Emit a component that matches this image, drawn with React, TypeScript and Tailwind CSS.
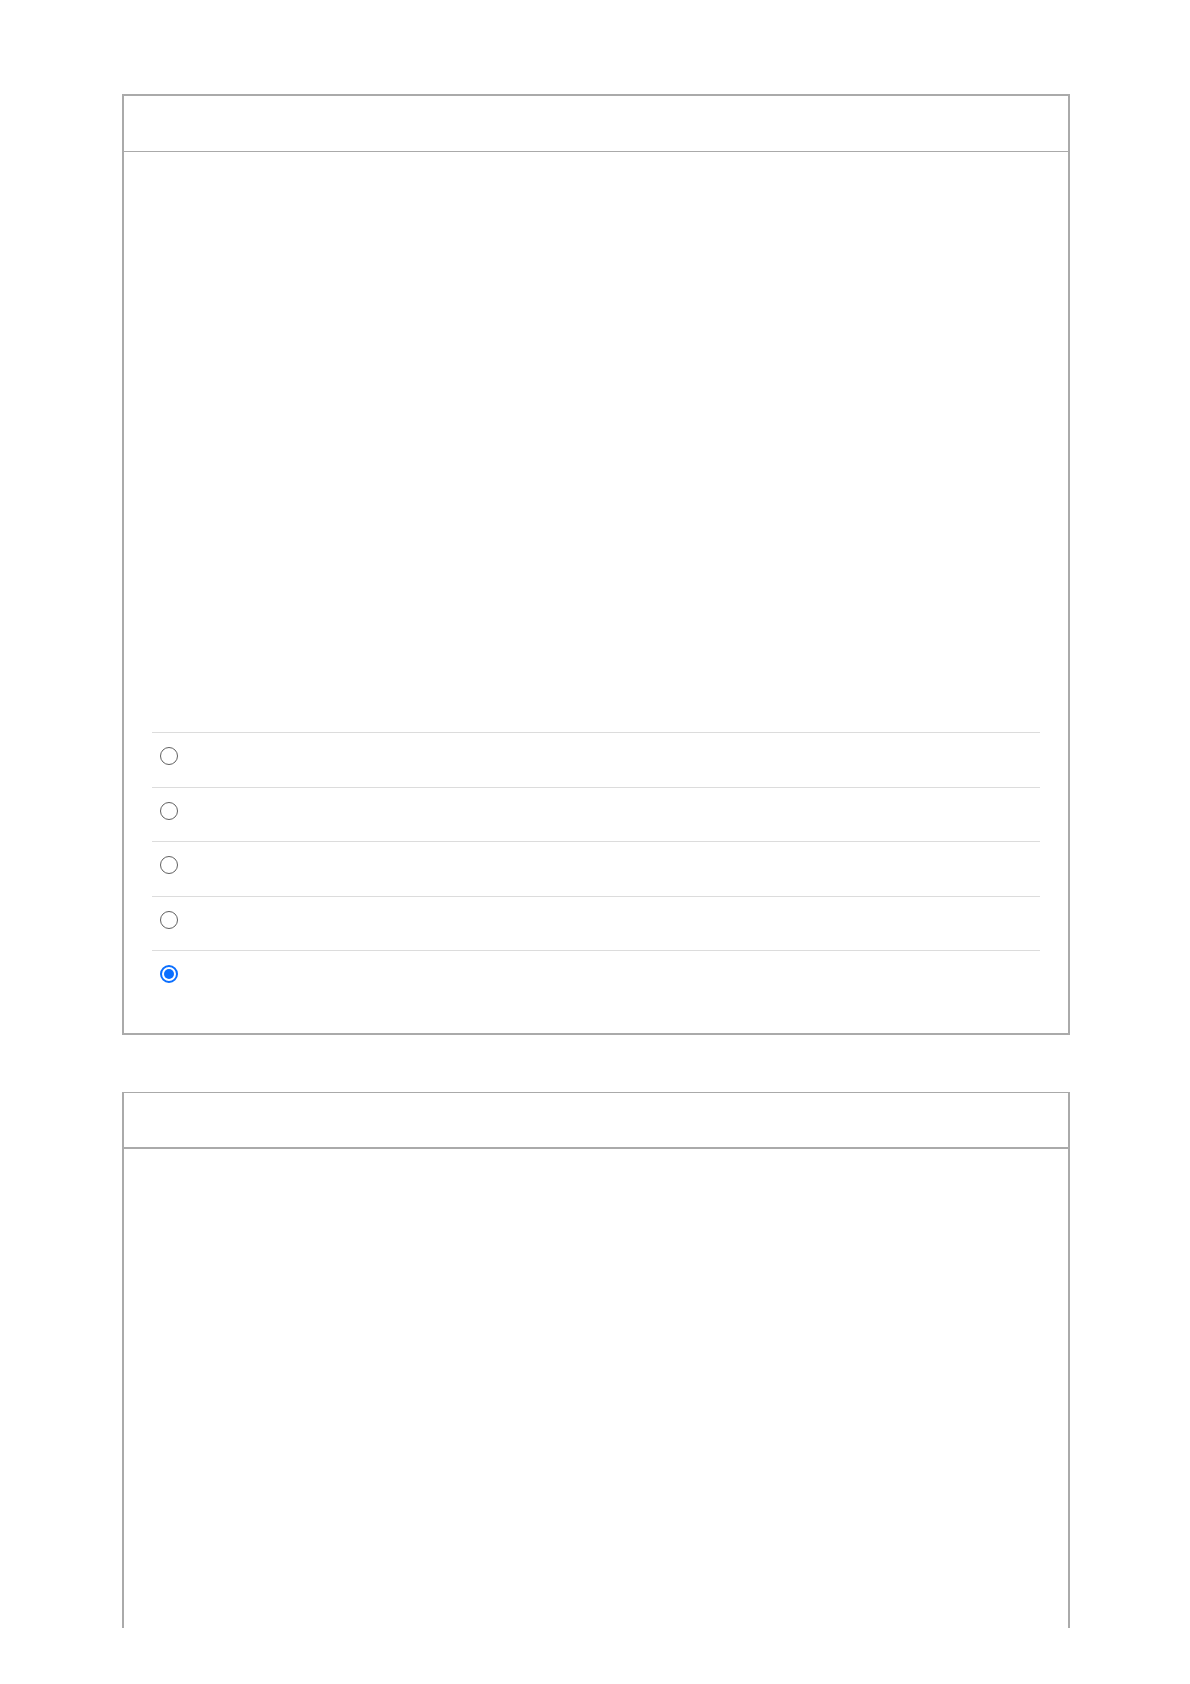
import React from "react";

function Radio({ checked }: { checked?: boolean }) {
  if (checked) {
    return (
      <span className="flex h-[18px] w-[18px] items-center justify-center rounded-full border-2 border-[#0b6fff] bg-white">
        <span className="h-[10px] w-[10px] rounded-full bg-[#0b6fff]" />
      </span>
    );
  }
  return <span className="block h-[18px] w-[18px] rounded-full border-[1.6px] border-[#606060] bg-white" />;
}

export default function App() {
  const rows = [false, false, false, false, true];
  return (
    <div className="min-h-[1684px] bg-white pt-[94px] font-['Liberation_Sans',sans-serif]">
      <div className="ml-[122px] w-[948px]">
        <section className="flex h-[941px] flex-col border-2 border-[#aaaaaa]">
          <div className="h-[56px] border-b border-[#aaaaaa]" />
          <div className="flex flex-1 flex-col px-[28px] pt-[580px]">
            {rows.map((c, i) => (
              <div key={i} className="h-[54.6px] border-t border-[#dcdcdc] pl-[8px] pt-[14px]">
                <Radio checked={c} />
              </div>
            ))}
          </div>
        </section>
        <section className="mt-[57px] flex h-[536px] flex-col border-x-2 border-t border-[#aaaaaa]">
          <div className="h-[56px] border-b-2 border-[#aaaaaa]" />
          <div className="flex-1" />
        </section>
      </div>
    </div>
  );
}
